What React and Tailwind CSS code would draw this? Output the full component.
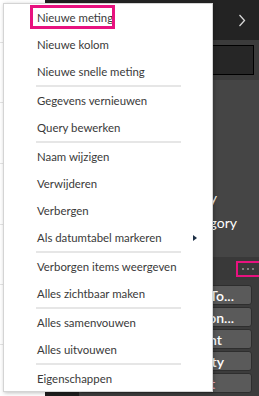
import React from 'react';

const ITEMS = [
  ['Nieuwe meting', 'Nieuwe kolom', 'Nieuwe snelle meting'],
  ['Gegevens vernieuwen', 'Query bewerken'],
  ['Naam wijzigen', 'Verwijderen', 'Verbergen', 'Als datumtabel markeren'],
  ['Verborgen items weergeven', 'Alles zichtbaar maken'],
  ['Alles samenvouwen', 'Alles uitvouwen'],
  ['Eigenschappen'],
];

const FIELDS = [
  { label: 'Ship To...', pr: 'pr-[17px]' },
  { label: 'Region...', pr: 'pr-[17px]' },
  { label: 'Amount', pr: 'pr-[29px]' },
  { label: 'Quantity', pr: 'pr-[27px]' },
  { label: 'Product', pr: 'pr-[36px]', tint: true },
];

function MenuItem({ label }) {
  return (
    <div className="h-[27px] flex items-center pl-[33px] pr-[15px] text-[#3a3a3a]">
      <span className="flex-1">{label}</span>
      {label === 'Als datumtabel markeren' && (
        <span className="w-0 h-0 border-y-[3.5px] border-y-transparent border-l-[4px] border-l-[#1d2f45]" />
      )}
    </div>
  );
}

export default function App() {
  return (
    <div
      className="relative w-[259px] h-[396px] overflow-hidden flex bg-white"
      style={{ fontFamily: 'Lato, "Open Sans", sans-serif' }}
    >
      {/* light canvas on the left */}
      <div className="w-[45px] flex flex-col">
        <div className="h-[43px] border-b border-[#e4e4e4]" />
        <div className="h-[60px] border-b border-[#e4e4e4]" />
        <div className="h-[61px] border-b border-[#e4e4e4]" />
        <div className="h-[61px] border-b border-[#e4e4e4]" />
        <div className="h-[60px] border-b border-[#e4e4e4]" />
        <div className="h-[60px] border-b border-[#e4e4e4]" />
      </div>
      <div className="w-[34px] bg-[#1e1e1e]" />

      {/* dark panel */}
      <div className="flex-1 flex flex-col bg-[#3c3c3c] text-white">
        <div className="h-[40px] bg-[#232323] flex items-center justify-end pr-[13px]">
          <svg width="8" height="13" viewBox="0 0 8 13" fill="none">
            <polyline points="1.5,1 6.5,6.5 1.5,12" stroke="#d6d6d6" strokeWidth="1.3" />
          </svg>
        </div>
        <div className="h-[40px] bg-[#3b3b3b] pt-[5px] pr-[5px]">
          <div className="h-[30px] border border-black bg-[#262626]" />
        </div>
        <div className="h-[177px] bg-[#454545] flex flex-col pt-[105px] text-[14px] leading-[25px]">
          <div className="w-[138px] text-right">Country</div>
          <div className="w-[158px] text-right">Category</div>
        </div>
        <div className="h-[23px] bg-[#393939] flex items-center justify-end -mr-[3px]">
          <div className="w-[26px] h-[16px] border-2 border-[#e8127f] flex items-center justify-center gap-[3px] pr-[2px]">
            <span className="w-[2px] h-[2px] rounded-full bg-[#9a9a9a]" />
            <span className="w-[2px] h-[2px] rounded-full bg-[#9a9a9a]" />
            <span className="w-[2px] h-[2px] rounded-full bg-[#9a9a9a]" />
          </div>
        </div>
        <div className="flex-1 bg-[#3c3c3c] flex flex-col gap-[2px] pt-[5px] pr-[7px]">
          {FIELDS.map((f) => (
            <div
              key={f.label}
              className={`h-[20px] rounded-[3px] bg-[#5a5a5a] border border-[#2e2e2e] flex items-center justify-end text-[14px] font-semibold ${f.pr} ${f.tint ? 'text-[#f3b0c4]' : 'text-white'}`}
            >
              {f.label}
            </div>
          ))}
        </div>
      </div>

      {/* context menu */}
      <div className="absolute left-[3px] top-[3px] w-[210px] h-[389px] bg-white border border-[#d4d4d4] shadow-[1px_1px_4px_rgba(0,0,0,0.25)] text-[11.4px]">
        {ITEMS.map((group, i) => (
          <div key={i}>
            {i > 0 && <div className="ml-[32px] w-[145px] h-[2px] bg-[#e6e6e6]" />}
            {group.map((label) => (
              <MenuItem key={label} label={label} />
            ))}
          </div>
        ))}
      </div>
      <div className="absolute left-[30px] top-[5px] w-[85px] h-[24px] border-[3px] border-[#e8127f]" />
    </div>
  );
}
